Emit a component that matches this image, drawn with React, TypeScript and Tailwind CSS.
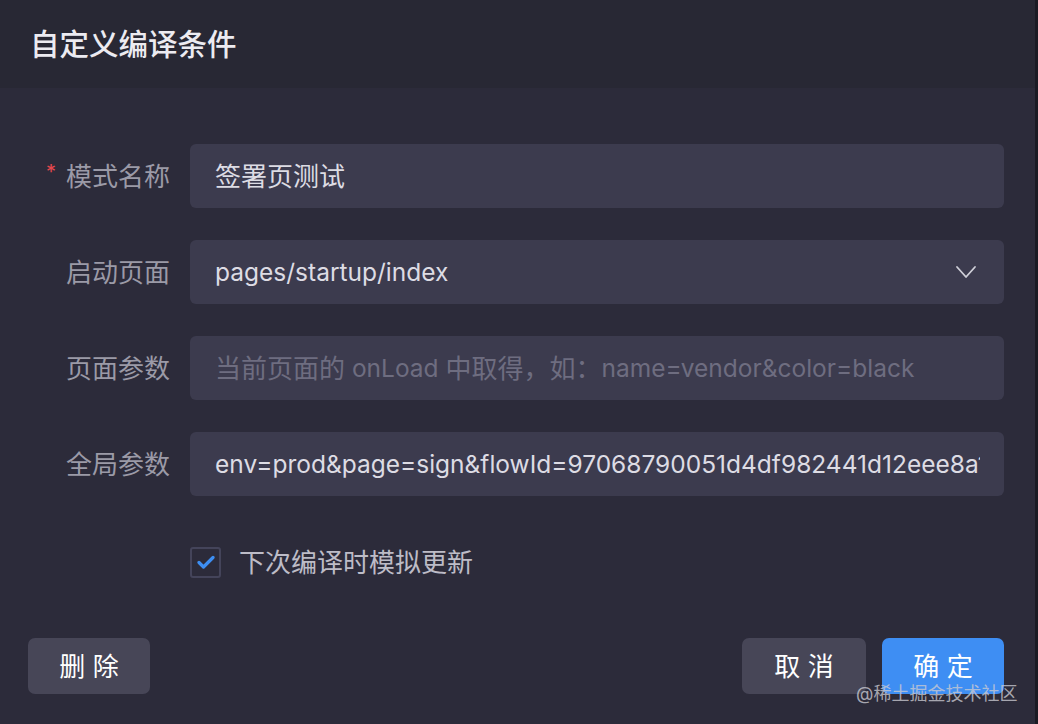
import React from "react";

const font = { fontFamily: 'Inter, "Noto Sans CJK SC", sans-serif' };

function Field({ label, required, children }: { label: string; required?: boolean; children: React.ReactNode }) {
  return (
    <div className="flex items-center h-[64px]">
      <div className="w-[190px] shrink-0 pr-[20px] flex justify-end items-center text-[26px] text-[#9b9aa7]">
        {required && <span className="text-[#e5484d] text-[20px] mr-[10px] -mt-[8px]">*</span>}
        <span>{label}</span>
      </div>
      {children}
    </div>
  );
}

export default function App() {
  return (
    <div className="w-[1038px] h-[724px] flex bg-[#2c2b3a] overflow-hidden" style={font}>
      <div className="flex-1 min-w-0 flex flex-col">
        <div className="h-[88px] bg-[#282834] flex items-center pl-[30px]">
          <span className="text-[29.5px] font-medium text-[#ecebf1]">自定义编译条件</span>
        </div>
        <div className="flex-1 flex flex-col pt-[56px] pr-[31px]">
          <div className="flex flex-col gap-[32px]">
            <Field label="模式名称" required>
              <div className="flex-1 min-w-0 h-full rounded-[6px] bg-[#3c3b4e] flex items-center pl-[25px] text-[26px] text-[#dddce4]">
                签署页测试
              </div>
            </Field>
            <Field label="启动页面">
              <div className="flex-1 min-w-0 h-full rounded-[6px] bg-[#3c3b4e] flex items-center pl-[25px] pr-[27px] text-[24.5px] text-[#dddce4]">
                <span className="flex-1">pages/startup/index</span>
                <svg width="22" height="14" viewBox="0 0 22 14" fill="none">
                  <path d="M2 2 L11 12 L20 2" stroke="#cfcfd8" strokeWidth="1.8" strokeLinecap="round" strokeLinejoin="round" />
                </svg>
              </div>
            </Field>
            <Field label="页面参数">
              <div className="flex-1 min-w-0 h-full rounded-[6px] bg-[#3c3b4e] flex items-center pl-[25px] text-[24.5px] text-[#6e6d80] whitespace-nowrap overflow-hidden">
                <span className="text-[26px]">当前页面的</span>&nbsp;onLoad&nbsp;<span className="text-[26px]">中取得，如：</span>name=vendor&amp;color=black
              </div>
            </Field>
            <Field label="全局参数">
              <div className="flex-1 min-w-0 h-full rounded-[6px] bg-[#3c3b4e] flex items-center pl-[25px] pr-[24px] text-[24.5px] text-[#dddce4] overflow-hidden">
                <span className="whitespace-nowrap overflow-hidden">env=prod&amp;page=sign&amp;flowId=97068790051d4df982441d12eee8a1c3</span>
              </div>
            </Field>
          </div>
          <div className="flex items-center mt-[50px] pl-[190px] h-[32px]">
            <div className="w-[31px] h-[31px] rounded-[3px] border-2 border-[#44445a] flex items-center justify-center">
              <svg width="18" height="14" viewBox="0 0 18 14" fill="none">
                <path d="M2 7.5 L6.5 12 L16 2.5" stroke="#3d8ef2" strokeWidth="3.2" strokeLinecap="round" strokeLinejoin="round" />
              </svg>
            </div>
            <span className="ml-[18px] text-[26px] text-[#bdbcc7]">下次编译时模拟更新</span>
          </div>
          <div className="flex items-center mt-[60px] pl-[28px]">
            <button className="w-[122px] h-[56px] rounded-[7px] bg-[#474657] text-white text-[26px]">删 除</button>
            <div className="flex-1" />
            <button className="w-[124px] h-[56px] rounded-[7px] bg-[#474657] text-white text-[26px]">取 消</button>
            <button className="ml-[16px] w-[122px] h-[56px] rounded-[7px] bg-[#3e8ef3] text-white text-[26px]">确 定</button>
          </div>
        </div>
      </div>
      <div className="w-[3px] shrink-0 bg-[#1b1b24]" />
      <div className="absolute left-[856px] top-[680px] text-[18px] text-[#c9c9d1]/80 whitespace-nowrap">@稀土掘金技术社区</div>
    </div>
  );
}
